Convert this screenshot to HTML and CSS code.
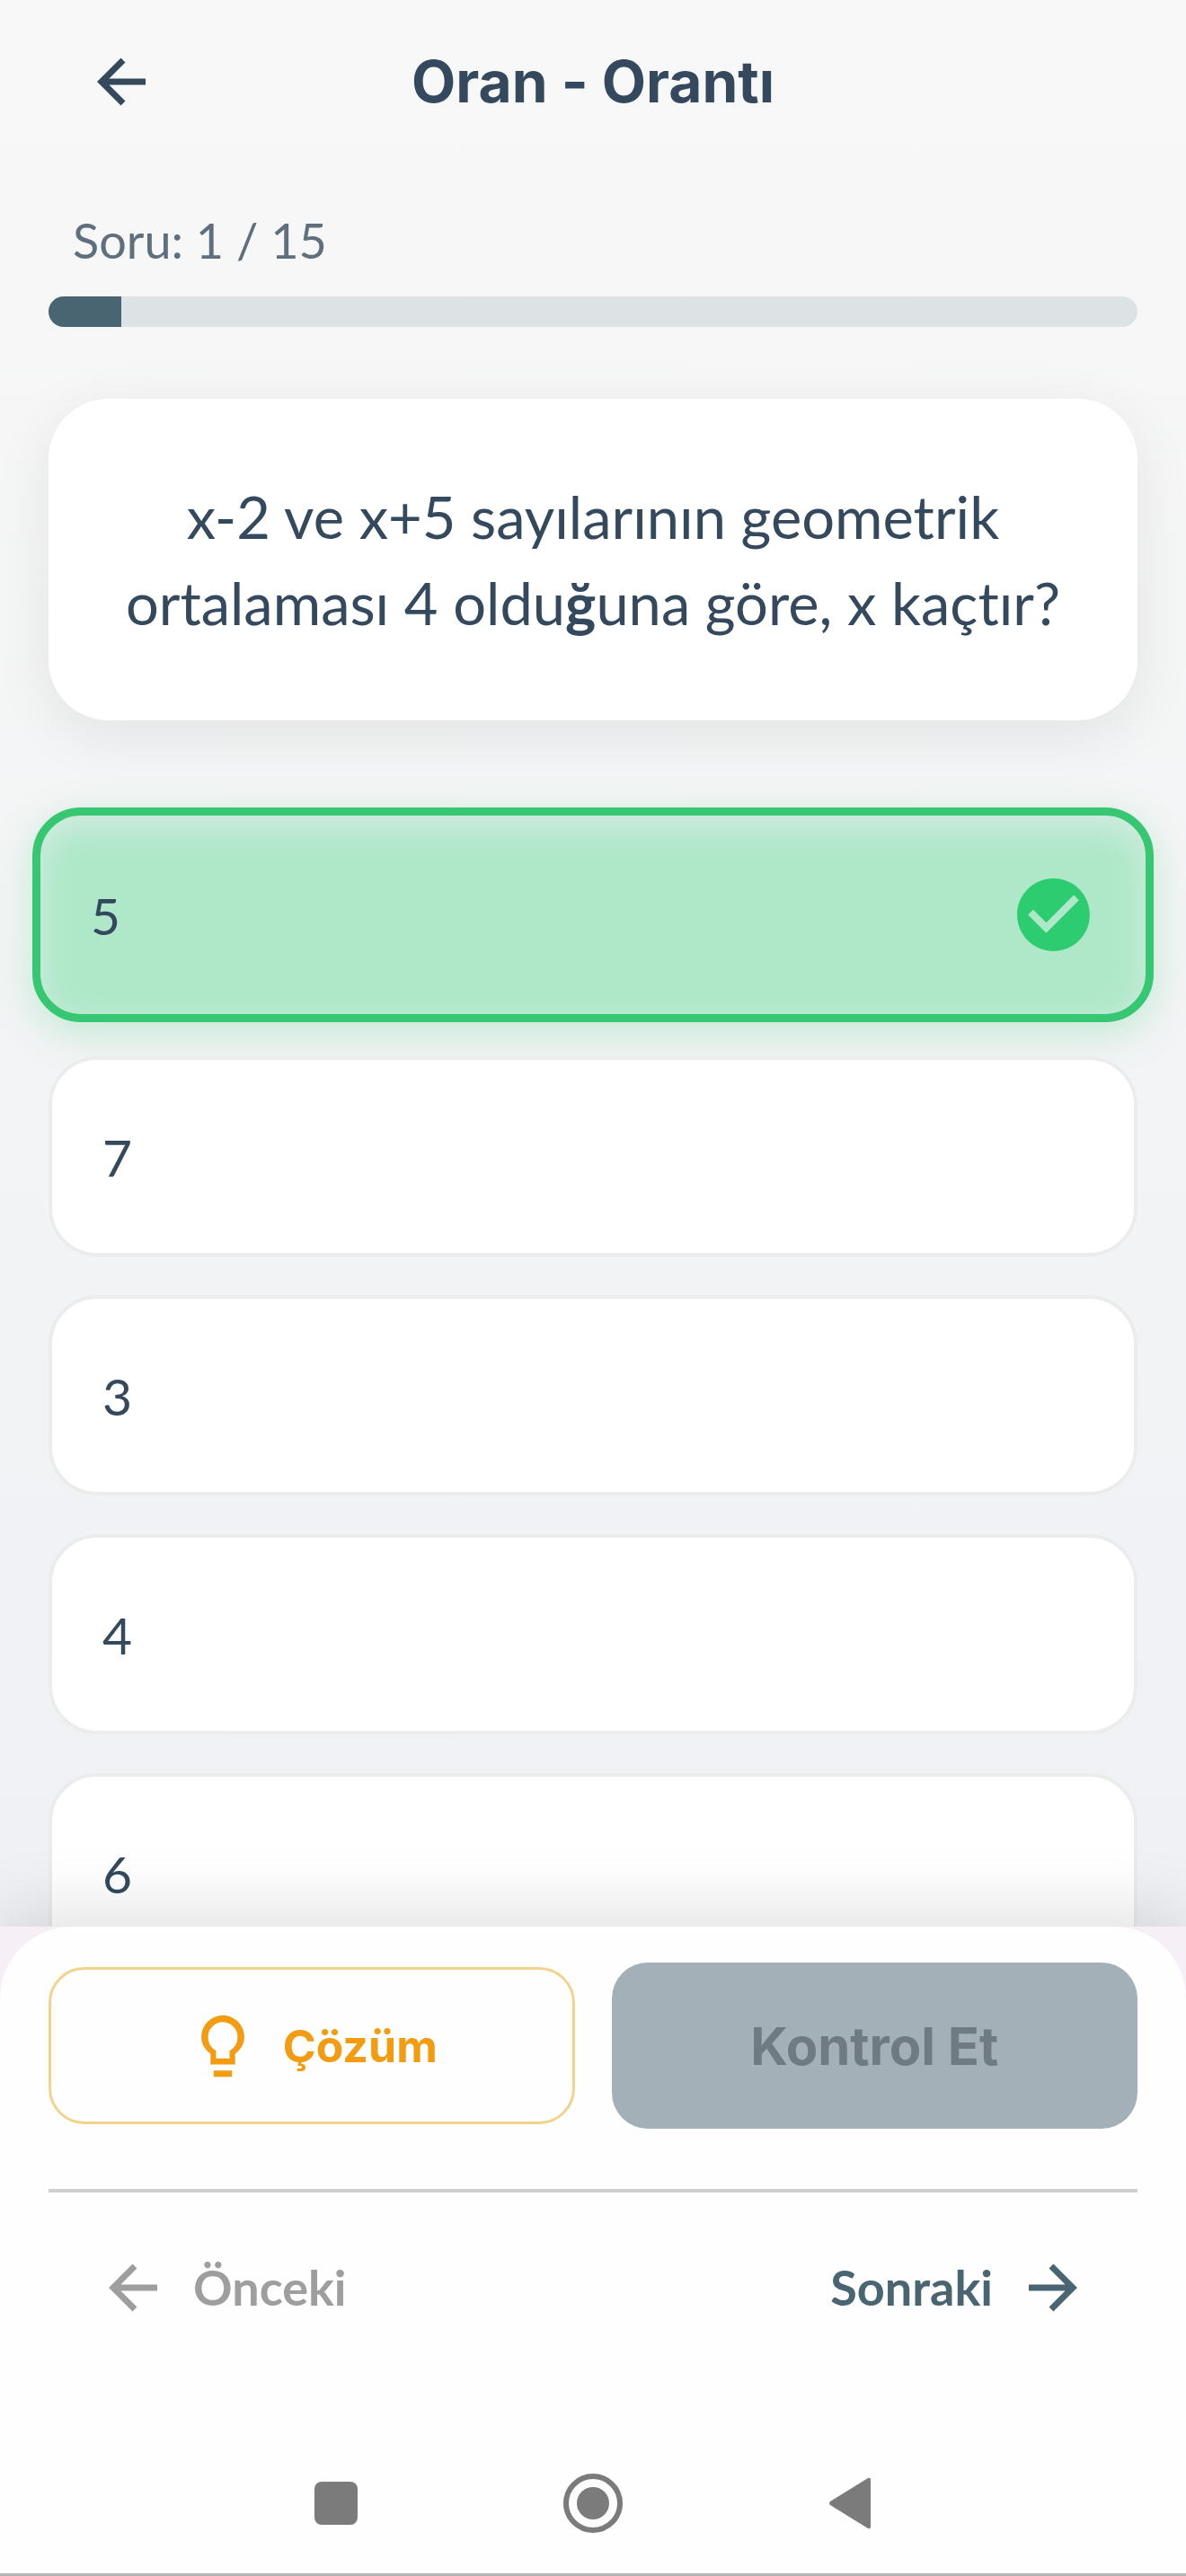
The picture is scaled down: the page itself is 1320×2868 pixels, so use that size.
FILE: index.html
```html
<!DOCTYPE html>
<html lang="tr">
<head>
<meta charset="utf-8">
<meta name="viewport" content="width=device-width, initial-scale=1.0">
<title>Oran - Orantı</title>
<link rel="stylesheet" href="styles.css">
</head>
<body>

<header class="topbar">
	<button class="back" aria-label="Geri">
		<svg class="arrow" viewBox="0 0 54 54"><path d="M54 27H5M29 3L5 27l24 24"/></svg>
	</button>
	<h1>Oran - Orantı</h1>
</header>

<main>
	<label class="counter" for="progress">Soru: 1 / 15</label>
	<progress id="progress" value="1" max="15"></progress>

	<p class="question">x-2 ve x+5 sayılarının geometrik ortalaması 4 oldu<b>ğ</b>una göre, x kaçtır?</p>

	<div class="options">
		<button class="option correct">5
			<svg class="check" viewBox="0 0 24 24"><path d="M12 2C6.48 2 2 6.48 2 12s4.48 10 10 10 10-4.48 10-10S17.52 2 12 2zm-2 15l-5-5 1.41-1.41L10 14.17l7.59-7.59L19 8l-9 9z"/></svg>
		</button>
		<button class="option">7</button>
		<button class="option">3</button>
		<button class="option">4</button>
		<button class="option">6</button>
	</div>
</main>

<footer>
	<div class="panel">
		<div class="actions">
			<button class="solution">
				<svg class="bulb" viewBox="0 0 24 24"><path d="M9 20h6v2H9zM12 2a7 7 0 0 0-7 7c0 2.400 1.200 4.200 3 5.500V18h8v-3.500c1.800-1.300 3-3.100 3-5.500a7 7 0 0 0-7-7zm2.200 11.500V16H9.800v-2.500C8 12.500 7.200 11 7.200 9a4.800 4.800 0 0 1 9.600 0c0 2-.8 3.500-2.600 4.500z"/></svg>
				Çözüm
			</button>
			<button class="submit" disabled>Kontrol Et</button>
		</div>
		<hr>
		<nav class="pager">
			<button class="prev" disabled>
				<svg class="arrow" viewBox="0 0 54 54"><path d="M54 27H5M29 3L5 27l24 24"/></svg>
				Önceki
			</button>
			<button class="next">
				Sonraki
				<svg class="arrow" viewBox="0 0 54 54"><path d="M0 27h49M25 3l24 24-24 24"/></svg>
			</button>
		</nav>
		<!-- android keys -->
		<div class="keys">
			<button aria-label="Son uygulamalar"><svg viewBox="0 0 66 66"><rect x="9" y="9" width="48" height="48" rx="8"/></svg></button>
			<button aria-label="Ana ekran"><svg viewBox="0 0 66 66"><circle cx="33" cy="33" r="30" class="ring"/><circle cx="33" cy="33" r="18"/></svg></button>
			<button aria-label="Geri"><svg viewBox="0 0 66 66"><path d="M11 31L53 5q3-1 3 2v52q0 3-3 2L11 35q-2-2 0-4z"/></svg></button>
		</div>
	</div>
</footer>

</body>
</html>
```
FILE: styles.css
```css
* {
	box-sizing: border-box;
}
body {
	display: flex;
	flex-direction: column;
	height: 100vh;
	margin: 0;
	font-family: Lato, sans-serif;
	font-variant-ligatures: none;
	color: #34495e;
	background: linear-gradient(#f8f8f8, #f3f4f5 40%, #eff1f5 75%);
}
button {
	margin: 0;
	padding: 0;
	border: none;
	background: none;
	color: inherit;
	font: inherit;
}
svg {
	display: block;
	fill: currentColor;
}
.arrow {
	width: 54px;
	height: 54px;
	fill: none;
	stroke: currentColor;
	stroke-width: 7;
}
/* header */
.topbar {
	display: grid;
	grid-template-columns: 54px 1fr 54px;
	align-items: center;
	height: 182px;
	padding: 0 108px;
}
h1 {
	margin: 0;
	text-align: center;
	font-family: Inter, sans-serif;
	font-size: 64px;
	font-weight: 700;
	line-height: 78px;
}
/* question */
main {
	flex: 1;
	min-height: 0;
	padding: 48px 54px 0;
	overflow-y: auto;
	scrollbar-width: none;
}
.counter {
	display: block;
	padding: 0 27px;
	font-size: 54px;
	line-height: 76px;
	color: #5f6f7e;
}
progress {
	display: block;
	width: 100%;
	height: 34px;
	margin-top: 24px;
	border: none;
	border-radius: 17px;
	overflow: hidden;
	appearance: none;
	background: #dde2e4;
}
progress::-webkit-progress-bar {
	background: #dde2e4;
}
progress::-webkit-progress-value {
	background: #4a6572;
}
.question {
	margin: 80px 0 0;
	padding: 83px 67px;
	border-radius: 67px;
	background: #fff;
	box-shadow: 0 16px 66px rgba(0, 0, 0, .08);
	text-align: center;
	font-size: 65px;
	line-height: 96px;
}
/* options */
.options {
	display: flex;
	flex-direction: column;
	gap: 43px;
	padding: 97px 0 43px;
}
.option {
	display: flex;
	flex: none;
	align-items: center;
	justify-content: space-between;
	height: 223px;
	padding: 0 56px;
	border: 4px solid #ececec;
	border-radius: 54px;
	background: #fff;
	font-size: 57px;
}
.option.correct {
	height: 239px;
	margin: 0 -18px -5px;
	padding: 0 54px 0 56px;
	border: 9px solid #37c773;
	background: #afe8c9;
	box-shadow: 0 12px 44px rgba(46, 204, 113, .25), inset 0 12px 36px rgba(236, 238, 242, .6);
}
.check {
	width: 97px;
	height: 97px;
	color: #2ecc71;
}
/* bottom panel */
footer {
	position: relative;
	background: #f6eff6;
	box-shadow: 0 -10px 80px rgba(0, 0, 0, .14);
}
.panel {
	padding: 40px 54px 0;
	border-radius: 80px 80px 0 0;
	border-bottom: 3px solid #b5b5b5;
	background: #fefefe;
}
.actions {
	display: grid;
	grid-template-columns: 1fr 1fr;
	align-items: center;
	gap: 41px;
	font-family: Inter, sans-serif;
	font-weight: 700;
}
.solution {
	display: flex;
	align-items: center;
	justify-content: center;
	gap: 26px;
	height: 175px;
	border: 3px solid #f3d38c;
	border-radius: 40px;
	color: #f39c12;
	font-size: 50px;
}
.bulb {
	width: 82px;
	height: 82px;
}
.submit {
	height: 185px;
	border-radius: 40px;
	background: #a3b0b7;
	color: #6f7a82;
	font-size: 58px;
}
hr {
	height: 4px;
	margin: 67px 0 0;
	border: none;
	background: #cfcfcf;
}
.pager {
	display: flex;
	justify-content: space-between;
	padding: 67px 67px 0;
	font-size: 54px;
	font-weight: 700;
	line-height: 78px;
}
.pager button {
	display: flex;
	align-items: center;
	gap: 40px;
}
.prev {
	color: #9e9e9e;
}
.next {
	color: #4a6572;
}
/* android keys */
.keys {
	display: flex;
	justify-content: center;
	gap: 220px;
	padding: 168px 0 45px;
	color: #7b7b7b;
}
.keys svg {
	width: 66px;
	height: 66px;
}
.ring {
	fill: none;
	stroke: currentColor;
	stroke-width: 6;
}
```
